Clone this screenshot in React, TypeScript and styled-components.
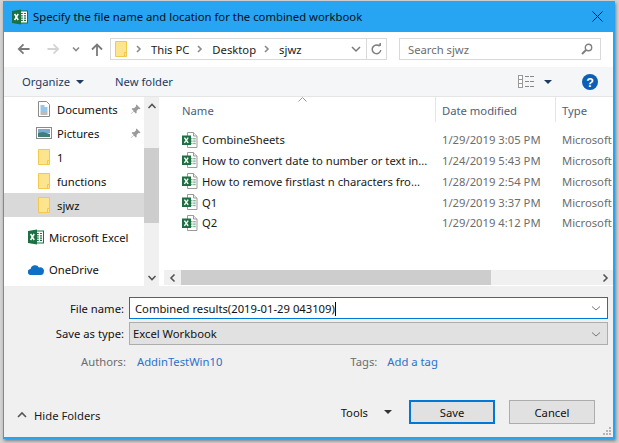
import React from "react";
import styled, { createGlobalStyle } from "styled-components";

const Global = createGlobalStyle`
  html, body { margin: 0; padding: 0; width: 619px; height: 443px; overflow: hidden; background: #d2d2d2; }
  * { box-sizing: border-box; }
  body { font-family: "Noto Sans", "Open Sans", sans-serif; font-size: 11.25px; color: #111; }
`;

const Page = styled.div`
  width: 619px; height: 443px; padding: 1px 4px 4px 3px; display: flex;
`;
const Win = styled.div`
  position: relative; width: 612px; height: 438px; background: #f0f0f0;
  border: 1px solid #27a3f0; border-right-width: 2px; border-top: 0; border-bottom-width: 2px; display: flex; flex-direction: column;
  box-shadow: 1px 2px 3px rgba(0,0,0,.4);
`;
const TitleBar = styled.div`
  height: 31px; margin: 0 -1px; background: #27a4f2; display: flex; align-items: center; padding: 0 11px 0 9px; flex: none;
`;
const TitleText = styled.div`
  margin-left: 5px; font-size: 11.3px; color: #06101a; flex: 1; white-space: nowrap;
`;
const NavBar = styled.div`
  height: 35px; background: #fff; display: flex; align-items: center; padding: 0 13px 1px 13px; flex: none;
`;
const NavBtn = styled.div<{ $w: number; $ml?: number }>`
  width: ${p => p.$w}px; margin-left: ${p => p.$ml ?? 0}px; height: 22px; display: flex; align-items: center; justify-content: center; flex: none;
`;
const Address = styled.div`
  margin-left: 7px; width: 277px; height: 22px; border: 1px solid #d9d9d9; display: flex; align-items: center; flex: none; padding-left: 4px;
`;
const Crumb = styled.span`
  margin-right: 8px; color: #1a1a1a; white-space: nowrap;
`;
const CrumbSep = styled.span<{ $ml?: number }>`
  width: 4px; margin: 0 11px 0 ${p => p.$ml ?? 0}px; display: flex; flex: none;
`;
const AddressEnd = styled.div`
  margin-left: auto; display: flex; align-items: center; height: 100%;
`;
const Refresh = styled.div`
  width: 20px; height: 100%; border-left: 1px solid #d9d9d9; display: flex; align-items: center; justify-content: center; margin-left: 5px;
`;
const Search = styled.div`
  margin-left: 12px; width: 202px; height: 22px; border: 1px solid #d9d9d9; display: flex; align-items: center; justify-content: space-between; padding: 0 7px 0 8px;
  color: #6d6d6d; flex: none;
`;
const CommandBar = styled.div`
  height: 30px; background: #f5f6f7; border-bottom: 1px solid #e5e5e5; display: flex; align-items: center; padding: 0 15px 0 18px; flex: none; color: #1f3a5f;
`;
const Cmd = styled.span<{ $gap?: number }>`
  margin-left: ${p => p.$gap ?? 0}px; white-space: nowrap; display: flex; align-items: center;
`;
const Caret = styled.span<{ $ml: number; $mr?: number; $c?: string }>`
  margin-left: ${p => p.$ml}px; margin-right: ${p => p.$mr ?? 0}px; width: 0; height: 0; border-left: 4px solid transparent; border-right: 4px solid transparent; border-top: 4px solid ${p => p.$c ?? "#1f3a5f"}; flex: none;
`;
const CmdEnd = styled.div`
  margin-left: auto; display: flex; align-items: center;
`;
const Main = styled.div`
  height: 189px; display: flex; background: #fff; flex: none;
`;
const Sidebar = styled.div`
  width: 140px; flex: none;
`;
const NavRow = styled.div<{ $sel?: boolean; $indent: number; $mt?: number }>`
  height: 24px; margin-top: ${p => p.$mt ?? 0}px; padding-left: ${p => p.$indent}px; display: flex; align-items: center; background: ${p => p.$sel ? "#d9d9d9" : "transparent"}; white-space: nowrap;
`;
const NavLabel = styled.span<{ $ml: number }>`
  margin-left: ${p => p.$ml}px; flex: 1;
`;
const Pin = styled.span`
  margin-right: 3px; display: flex;
`;
const VScroll = styled.div`
  width: 15px; flex: none; background: #f0f0f0; display: flex; flex-direction: column;
`;
const ScrollBtn = styled.div`
  height: 17px; flex: none; display: flex; align-items: center; justify-content: center;
`;
const VThumb = styled.div`
  margin-top: 34px; height: 75px; background: #cdcdcd;
`;
const Spring = styled.div`
  flex: 1;
`;
const Files = styled.div`
  margin-left: 5px; flex: 1; min-width: 0; display: flex; flex-direction: column; position: relative; overflow: hidden;
`;
const SortArrow = styled.div`
  position: absolute; left: 134px; top: 0; display: flex;
`;
const Header = styled.div`
  height: 25px; display: flex; flex: none; color: #4c607a;
`;
const HeadCell = styled.div<{ $w?: number; $pl: number; $sep?: boolean }>`
  ${p => p.$w ? `width:${p.$w}px;flex:none;` : "flex:1;"} padding-left: ${p => p.$pl}px; border-right: ${p => p.$sep ? "1px solid #e5e5e5" : "0"}; display: flex; align-items: center; padding-top: 1px;
`;
const Rows = styled.div`
  flex: 1; padding-top: 7.3px;
`;
const Row = styled.div`
  height: 20.8px; display: flex; align-items: center; white-space: nowrap;
`;
const NameCell = styled.div`
  width: 272px; flex: none; padding-left: 18px; display: flex; align-items: center; overflow: hidden;
`;
const FileName = styled.span`
  margin-left: 4px; color: #1a1a1a;
`;
const DateCell = styled.div`
  width: 120px; flex: none; padding-left: 6px; color: #6d6d6d;
`;
const TypeCell = styled.div`
  flex: 1; padding-left: 6px; color: #6d6d6d; overflow: hidden;
`;
const HScroll = styled.div`
  height: 15px; flex: none; background: #f0f0f0; display: flex; margin-bottom: 1px;
`;
const HBtn = styled.div`
  width: 17px; flex: none; display: flex; align-items: center; justify-content: center;
`;
const HThumb = styled.div`
  width: 310px; background: #cdcdcd;
`;
const Form = styled.div`
  flex: 1; padding: 11px 5px 0 0; display: flex; flex-direction: column;
`;
const FormRow = styled.div<{ $mt?: number }>`
  display: flex; align-items: center; margin-top: ${p => p.$mt ?? 0}px;
`;
const FormLabel = styled.div`
  width: 120px; text-align: right; flex: none; margin-right: 5px; color: #111;
`;
const Field = styled.div<{ $sel?: boolean }>`
  flex: 1; height: ${p => p.$sel ? 23 : 22}px; border: 1px solid ${p => p.$sel ? "#adadad" : "#0078d7"}; background: ${p => p.$sel ? "#e1e1e1" : "#fff"};
  display: flex; align-items: center; padding: 0 6px 0 ${p => p.$sel ? 3 : 5}px;
`;
const FieldText = styled.span`
  flex: 1; white-space: nowrap;
`;
const Cursor = styled.span`
  display: inline-block; width: 1px; height: 14px; background: #000; vertical-align: -3px;
`;
const Meta = styled.div`
  display: flex; align-items: center; margin-top: 7px; height: 18px; white-space: nowrap;
`;
const MetaLabel = styled.span<{ $ml: number }>`
  margin-left: ${p => p.$ml}px; color: #6d6d6d;
`;
const MetaLink = styled.span<{ $ml: number }>`
  margin-left: ${p => p.$ml}px; color: #2a72cc;
`;
const Footer = styled.div`
  margin-top: auto; height: 36px; margin-bottom: 9px; display: flex; align-items: center; padding: 0 0 0 13px;
`;
const HideFolders = styled.div`
  display: flex; align-items: center; color: #1a1a1a; gap: 7px; margin-top: 10px;
`;
const Tools = styled.div`
  margin-left: auto; display: flex; align-items: center; margin-right: 17px; margin-top: 4px;
`;
const Btn = styled.div<{ $primary?: boolean }>`
  width: 86px; height: 24px; margin-top: 4px; display: flex; align-items: center; justify-content: center;
  background: #e1e1e1; border: ${p => p.$primary ? "2px solid #0078d7" : "1px solid #adadad"}; margin-right: 13px; margin-left: ${p => p.$primary ? 0 : 1}px; color: #111;
`;
const Grip = styled.div`
  position: absolute; right: 1px; bottom: 1px; display: flex;
`;

const XlsxIcon = () => (
  <svg width="16" height="16" viewBox="0 0 16 16">
    <path d="M5.5.5h6l3.500 3.500v11.500H5.500z" fill="#fff" stroke="#9b9b9b" />
    <path d="M11.500.5v3.500h3.500" fill="#eee" stroke="#9b9b9b" />
    <g fill="#7fb595">
      <rect x="8" y="6" width="2.5" height="1.4" /><rect x="11.2" y="6" width="2.5" height="1.4" />
      <rect x="8" y="8.4" width="2.5" height="1.4" /><rect x="11.2" y="8.4" width="2.5" height="1.4" />
      <rect x="8" y="10.8" width="2.5" height="1.4" /><rect x="11.2" y="10.8" width="2.5" height="1.4" />
    </g>
    <rect x="0" y="3.5" width="9" height="9.5" fill="#1d6f42" />
    <path d="M2.400 5.700l3.800 5.200M6.200 5.700l-3.800 5.200" stroke="#fff" strokeWidth="1.4" />
  </svg>
);

const ExcelLogo = () => (
  <svg width="16" height="16" viewBox="0 0 16 16">
    <rect x="6" y="2" width="9.5" height="12" fill="#fff" stroke="#1d7044" strokeWidth="1" />
    <path d="M9 4.500h1.800M12 4.500h2M9 6.800h1.800M12 6.800h2M9 9.100h1.800M12 9.100h2M9 11.400h1.800M12 11.400h2" stroke="#1d7044" strokeWidth="1.2" />
    <path d="M0 2l9-1.600v15.200L0 14z" fill="#1d7044" />
    <path d="M2.600 5l3.600 6M6.200 5l-3.600 6" stroke="#fff" strokeWidth="1.5" />
  </svg>
);

const Folder = () => (
  <svg width="12" height="16" viewBox="0 0 12 16">
    <path d="M.5.5h11v15H.5z" fill="#fde48f" stroke="#f2c94c" />
    <path d="M9.500 15.500v-4h2" fill="none" stroke="#f2c94c" />
  </svg>
);

const Chev = ({ d, c = "#707070", w = 1.6 }: { d: string; c?: string; w?: number }) => (
  <svg width="10" height="10" viewBox="0 0 10 10" style={{ flex: "none" }}><path d={d} fill="none" stroke={c} strokeWidth={w} /></svg>
);

const PinIcon = () => (
  <svg width="11" height="11" viewBox="0 0 11 11">
    <path d="M6.500.5l4 4-1 .8-1-.2-2 2 .2 1.600-.9.8-2-2L1 10l-.3-.3 3-2.800-2-2 .8-.9 1.600.2 2-2-.2-1z" fill="#9a9a9a" />
  </svg>
);

const Arrow = ({ flip, c }: { flip?: boolean; c: string }) => (
  <svg width="13" height="12" viewBox="0 0 13 12" style={flip ? { transform: "scaleX(-1)" } : undefined}>
    <path d="M12.500 6H1.800M6.500 1.300L1.800 6l4.700 4.700" fill="none" stroke={c} strokeWidth="1.8" />
  </svg>
);

const files = [
  ["CombineSheets", "1/29/2019 3:05 PM"],
  ["How to convert date to number or text in...", "1/24/2019 5:43 PM"],
  ["How to remove firstlast n characters fro...", "1/28/2019 2:54 PM"],
  ["Q1", "1/29/2019 3:37 PM"],
  ["Q2", "1/29/2019 4:12 PM"],
];

export default function App() {
  return (
    <Page>
      <Global />
      <Win>
        <TitleBar>
          <ExcelLogo />
          <TitleText>Specify the file name and location for the combined workbook</TitleText>
          <svg width="11" height="11" viewBox="0 0 11 11"><path d="M.5.5l10 10M10.500.5l-10 10" stroke="#0b1a26" strokeWidth="1" /></svg>
        </TitleBar>
        <NavBar>
          <NavBtn $w={13}><Arrow c="#7a7a7a" /></NavBtn>
          <NavBtn $w={13} $ml={17}><Arrow flip c="#d4d4d4" /></NavBtn>
          <NavBtn $w={10} $ml={11}><Chev d="M2 3.500l3 3 3-3" c="#8a8a8a" /></NavBtn>
          <NavBtn $w={12} $ml={10}>
            <svg width="12" height="13" viewBox="0 0 12 13"><path d="M6 13V1.800M1 6.500L6 1.500l5 5" fill="none" stroke="#7a7a7a" strokeWidth="1.8" /></svg>
          </NavBtn>
          <Address>
            <Folder />
            <CrumbSep $ml={9}><Chev d="M1 2l3 3-3 3" c="#8a8a8a" /></CrumbSep>
            <Crumb>This PC</Crumb>
            <CrumbSep><Chev d="M1 2l3 3-3 3" c="#8a8a8a" /></CrumbSep>
            <Crumb>Desktop</Crumb>
            <CrumbSep><Chev d="M1 2l3 3-3 3" c="#8a8a8a" /></CrumbSep>
            <Crumb>sjwz</Crumb>
            <AddressEnd>
              <Chev d="M1 3l4 4 4-4" c="#7a7a7a" w={1.5} />
              <Refresh>
                <svg width="11" height="12" viewBox="0 0 11 12"><path d="M8.600 3.300A4.300 4.300 0 1 0 9.800 7M5.500 2.200h3.700V-.5" fill="none" stroke="#808080" strokeWidth="1.5" /></svg>
              </Refresh>
            </AddressEnd>
          </Address>
          <Search>
            <span>Search sjwz</span>
            <svg width="12" height="12" viewBox="0 0 12 12"><circle cx="7.500" cy="4.500" r="3.200" fill="none" stroke="#808080" strokeWidth="1.4" /><path d="M5 7L1 11" stroke="#808080" strokeWidth="2" /></svg>
          </Search>
        </NavBar>
        <CommandBar>
          <Cmd>Organize<Caret $ml={6} /></Cmd>
          <Cmd $gap={31}>New folder</Cmd>
          <CmdEnd>
            <svg width="16" height="13" viewBox="0 0 16 13">
              <rect x=".5" y=".5" width="4" height="12" fill="#fff" stroke="#999" />
              <path d="M.5 4.500h4M.5 8.500h4" stroke="#999" />
              <path d="M7 1.500h9M7 6.500h9M7 11.500h9" stroke="#888" strokeDasharray="4 1" />
            </svg>
            <Caret $ml={10} $mr={30} />
            <svg width="16" height="16" viewBox="0 0 16 16">
              <circle cx="8" cy="8" r="8" fill="#0b5fb4" />
              <text x="8" y="12.500" textAnchor="middle" fontSize="12.5" fontWeight="700" fill="#fff" fontFamily="Liberation Sans">?</text>
            </svg>
          </CmdEnd>
        </CommandBar>
        <Main>
          <Sidebar>
            <NavRow $indent={34}>
              <svg width="12" height="16" viewBox="0 0 12 16">
                <path d="M.5.5h8l3 3v12H.5z" fill="#fff" stroke="#8a8a8a" />
                <path d="M2.500 5h4M2.500 7h7M2.500 9h7" stroke="#2f8fd8" /><path d="M2.500 11h7M2.500 13h7" stroke="#777" />
              </svg>
              <NavLabel $ml={7}>Documents</NavLabel>
              <Pin><PinIcon /></Pin>
            </NavRow>
            <NavRow $indent={32}>
              <svg width="16" height="12" viewBox="0 0 16 12">
                <rect x=".5" y=".5" width="15" height="11" fill="#fff" stroke="#8a8a8a" />
                <rect x="2" y="2" width="12" height="4" fill="#7fa9d0" />
                <path d="M2 6l5-1 7 2v3H2z" fill="#3f7f78" />
              </svg>
              <NavLabel $ml={5}>Pictures</NavLabel>
              <Pin><PinIcon /></Pin>
            </NavRow>
            <NavRow $indent={34}><Folder /><NavLabel $ml={7}>1</NavLabel></NavRow>
            <NavRow $indent={34}><Folder /><NavLabel $ml={7}>functions</NavLabel></NavRow>
            <NavRow $indent={34} $sel><Folder /><NavLabel $ml={7}>sjwz</NavLabel></NavRow>
            <NavRow $indent={24} $mt={8}><ExcelLogo /><NavLabel $ml={5}>Microsoft Excel</NavLabel></NavRow>
            <NavRow $indent={24} $mt={8}>
              <svg width="16" height="11" viewBox="0 0 16 11">
                <path d="M3 11a3 3 0 0 1-.4-6A4.500 4.500 0 0 1 11 3.600 3.600 3.600 0 0 1 15.800 8c0 1.700-1.300 3-3 3z" fill="#0e6fc4" />
              </svg>
              <NavLabel $ml={5}>OneDrive</NavLabel>
            </NavRow>
          </Sidebar>
          <VScroll>
            <ScrollBtn><Chev d="M1.500 7l3.500-3.500L8.500 7" c="#555" /></ScrollBtn>
            <VThumb />
            <Spring />
            <ScrollBtn><Chev d="M1.500 3l3.500 3.500L8.500 3" c="#555" /></ScrollBtn>
          </VScroll>
          <Files>
            <SortArrow><svg width="9" height="5" viewBox="0 0 9 5"><path d="M.5 4.500l4-4 4 4" fill="none" stroke="#999" /></svg></SortArrow>
            <Header>
              <HeadCell $w={272} $pl={18} $sep>Name</HeadCell>
              <HeadCell $w={120} $pl={6} $sep>Date modified</HeadCell>
              <HeadCell $pl={6}>Type</HeadCell>
            </Header>
            <Rows>
              {files.map(([n, d]) => (
                <Row key={n}>
                  <NameCell><XlsxIcon /><FileName>{n}</FileName></NameCell>
                  <DateCell>{d}</DateCell>
                  <TypeCell>Microsoft</TypeCell>
                </Row>
              ))}
            </Rows>
            <HScroll>
              <HBtn><Chev d="M6.500 1.500L3 5l3.500 3.500" c="#555" /></HBtn>
              <HThumb />
              <Spring />
              <HBtn><Chev d="M3.500 1.500L7 5 3.500 8.500" c="#555" /></HBtn>
            </HScroll>
          </Files>
        </Main>
        <Form>
          <FormRow>
            <FormLabel>File name:</FormLabel>
            <Field>
              <FieldText>Combined results(2019-01-29 043109)<Cursor /></FieldText>
              <Chev d="M1 3.500l4 3.500 4-3.500" c="#777" w={1} />
            </Field>
          </FormRow>
          <FormRow $mt={3}>
            <FormLabel>Save as type:</FormLabel>
            <Field $sel>
              <FieldText>Excel Workbook</FieldText>
              <Chev d="M1 3.500l4 3.500 4-3.500" c="#777" w={1} />
            </Field>
          </FormRow>
          <Meta>
            <MetaLabel $ml={77}>Authors:</MetaLabel>
            <MetaLink $ml={11}>AddinTestWin10</MetaLink>
            <MetaLabel $ml={128}>Tags:</MetaLabel>
            <MetaLink $ml={10}>Add a tag</MetaLink>
          </Meta>
          <Footer>
            <HideFolders>
              <Chev d="M1 7l4-4 4 4" c="#555" />
              Hide Folders
            </HideFolders>
            <Tools>Tools<Caret $ml={16} $c="#333" /></Tools>
            <Btn $primary>Save</Btn>
            <Btn>Cancel</Btn>
          </Footer>
        </Form>
        <Grip>
          <svg width="9" height="9" viewBox="0 0 9 9" fill="#b5b5b5">
            <rect x="6" y="0" width="2" height="2" /><rect x="3" y="3" width="2" height="2" /><rect x="6" y="3" width="2" height="2" />
            <rect x="0" y="6" width="2" height="2" /><rect x="3" y="6" width="2" height="2" /><rect x="6" y="6" width="2" height="2" />
          </svg>
        </Grip>
      </Win>
    </Page>
  );
}
